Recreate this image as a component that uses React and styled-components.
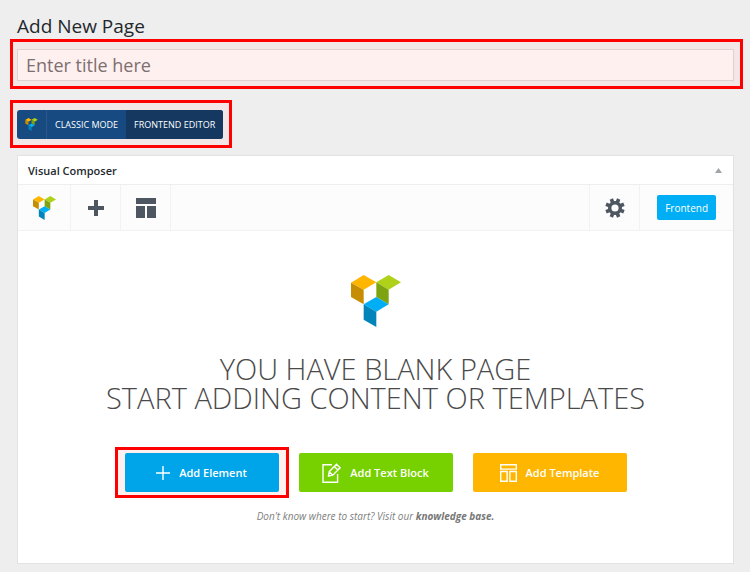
import React from "react";
import styled, { createGlobalStyle } from "styled-components";

const GlobalStyle = createGlobalStyle`
  * {
    box-sizing: border-box;
  }

  body {
    margin: 0;
    background-color: #eeeeee;
    color: #23282d;
    font-family: "Open Sans", "Noto Sans", sans-serif;
  }

  button, input {
    font-family: inherit;
  }
`;

const Page = styled.main`
  padding: 13px 16px 9px 17px;
`;

const Title = styled.h1`
  margin: 0 0 10px;
  font-size: 19px;
  line-height: 26px;
  font-weight: 400;
`;

const Highlight = styled.div`
  position: relative;
  isolation: isolate;
  display: ${props => (props.$inline ? "inline-flex" : "flex")};

  &::after {
    content: "";
    position: absolute;
    z-index: -1;
    inset: ${props => props.$inset};
    border: 3px solid #ff0000;
    background-color: ${props => props.$tint || "#f3e6e6"};
    pointer-events: none;
  }
`;

const TitleInput = styled.input`
  flex: 1;
  min-width: 0;
  height: 32px;
  padding: 0 8px;
  border: 1px solid #e0d0d0;
  background-color: #fff0f0;
  color: #32373c;
  font-size: 18px;

  &::placeholder {
    color: #7c6f6f;
    opacity: 1;
  }
`;

const ModeRow = styled.div`
  display: flex;
  margin: 29px 0 16px;
`;

const ModeSwitch = styled.div`
  display: flex;
  height: 29px;
  border-radius: 3px;
  overflow: hidden;
  background-color: #164a80;
`;

const ModeLogo = styled.div`
  display: flex;
  align-items: center;
  justify-content: center;
  width: 30px;
  border-right: 1px solid #2c5788;
`;

const ModeButton = styled.button`
  padding: 0 8px;
  border: 0;
  background-color: ${props => (props.$dark ? "#14385f" : "#164a80")};
  color: #ffffff;
  font-size: 9px;
  font-weight: 500;
  text-transform: uppercase;
`;

const Panel = styled.section`
  border: 1px solid #e2e2e2;
  background-color: #ffffff;
`;

const PanelHeader = styled.header`
  display: flex;
  align-items: center;
  justify-content: space-between;
  height: 29px;
  padding: 0 11px 0 10px;
  border-bottom: 1px solid #eeeeee;
`;

const PanelTitle = styled.h2`
  margin: 0;
  font-size: 11px;
  font-weight: 600;
`;

const ToggleButton = styled.button`
  display: flex;
  padding: 0;
  border: 0;
  background: none;
`;

const Toolbar = styled.nav`
  display: flex;
  height: 46px;
  border-bottom: 1px solid #f2f2f2;
  background-color: #fcfcfc;
`;

const ToolButton = styled.button`
  display: flex;
  align-items: center;
  justify-content: center;
  width: ${props => (props.$wide ? "53px" : "50px")};
  padding: 0;
  border: 0;
  border-right: 1px solid #f2f2f2;
  background: none;
`;

const ToolbarEnd = styled.div`
  display: flex;
  align-items: center;
  margin-left: auto;
  border-left: 1px solid #f2f2f2;

  ${ToolButton} {
    height: 100%;
  }
`;

const FrontendButton = styled.button`
  height: 25px;
  margin: 0 17px;
  padding: 0 8px;
  border: 0;
  border-radius: 2px;
  background-color: #00aef5;
  color: #ffffff;
  font-size: 10px;
  font-weight: 500;
`;

const Welcome = styled.div`
  display: flex;
  flex-direction: column;
  align-items: center;
  padding: 44px 16px 39px;
`;

const WelcomeTitle = styled.h3`
  margin: 27px 0 41px;
  color: #4a4a4a;
  font-size: 29px;
  line-height: 29px;
  font-weight: 300;
  text-align: center;
  text-transform: uppercase;
`;

const Actions = styled.div`
  display: flex;
  flex-wrap: wrap;
  justify-content: center;
  gap: 20px;
`;

const ActionButton = styled.button`
  display: flex;
  align-items: center;
  justify-content: center;
  gap: 9px;
  width: 154px;
  height: 39px;
  padding: 0;
  border: 0;
  border-radius: 2px;
  background-color: ${props => props.$color};
  color: #ffffff;
  font-size: 11px;
  font-weight: 600;
`;

const Hint = styled.p`
  margin: 16px 0 0;
  color: #808080;
  font-size: 10px;
  line-height: 16px;
  font-style: italic;
`;

const HintLink = styled.a`
  color: #777777;
  font-weight: 700;
  text-decoration: none;
`;

const Logo = ({ width, height }) => (
  <svg width={width} height={height} viewBox="0 0 150 156" aria-hidden="true">
    <path fill="#ffb600" d="M0 23 38 0l38 22-38 22z" />
    <path fill="#c68d00" d="M0 23l38 21v44L0 66z" />
    <path fill="#afd11a" d="M76 22 113 0l37 22-37 22z" />
    <path fill="#7ea310" d="M76 22l37 22v44L76 66z" />
    <path fill="#00aef5" d="M38 88l38-22 37 22-37 22z" />
    <path fill="#0084ba" d="M38 88l38 22v46L38 134z" />
  </svg>
);

const PlusIcon = () => (
  <svg width="16" height="16" viewBox="0 0 16 16" fill="#4d5661" aria-hidden="true">
    <path d="M6 0h4v6h6v4h-6v6H6v-6H0V6h6z" />
  </svg>
);

const LayoutIcon = () => (
  <svg width="20" height="20" viewBox="0 0 20 20" fill="#4d5661" aria-hidden="true">
    <path d="M0 0h20v6H0zM0 8h9v12H0zM11 8h9v12h-9z" />
  </svg>
);

const teeth = [0, 45, 90, 135, 180, 225, 270, 315];

const GearIcon = () => (
  <svg width="20" height="20" viewBox="0 0 20 20" aria-hidden="true">
    <circle cx="10" cy="10" r="5.3" fill="none" stroke="#4d5661" strokeWidth="3.4" />
    {teeth.map(angle => (
      <path
        key={angle}
        fill="#4d5661"
        d="M8.2 4V.3h3.6V4z"
        transform={`rotate(${angle + 22.5} 10 10)`}
      />
    ))}
  </svg>
);

const ThinPlusIcon = () => (
  <svg width="14" height="14" viewBox="0 0 14 14" fill="none" stroke="#fff" strokeWidth="1.4" aria-hidden="true">
    <path d="M7 0v14M0 7h14" />
  </svg>
);

const EditIcon = () => (
  <svg width="19" height="20" viewBox="0 0 19 20" fill="none" stroke="#fff" strokeWidth="1.4" aria-hidden="true">
    <path d="M10 1.7H1v17.6h14.6V11" />
    <path d="M6.5 13.2l.7-4.5 7.3-7.5 3.6 3.6-7.3 7.4zM12.3 3.5l3.6 3.6M7.2 8.7l3.6 3.5" />
  </svg>
);

const TemplateIcon = () => (
  <svg width="17" height="18" viewBox="0 0 17 18" fill="none" stroke="#fff" strokeWidth="1.4" aria-hidden="true">
    <path d="M.7.7h15.6v4.4H.7zM.7 7.5h6.4v9.8H.7zM9.9 7.5h6.4v9.8H9.9z" />
  </svg>
);

const App = () => {
  return (
    <Page>
      <GlobalStyle />
      <Title>Add New Page</Title>
      <Highlight $inset="-10px -9px -8px -7px">
        <TitleInput type="text" aria-label="Page title" placeholder="Enter title here" />
      </Highlight>

      <ModeRow>
        <Highlight $inline $inset="-10px -9px -9px -7px">
          <ModeSwitch>
            <ModeLogo>
              <Logo width={13} height={13} />
            </ModeLogo>
            <ModeButton type="button">Classic mode</ModeButton>
            <ModeButton type="button" $dark>Frontend editor</ModeButton>
          </ModeSwitch>
        </Highlight>
      </ModeRow>

      <Panel>
        <PanelHeader>
          <PanelTitle>Visual Composer</PanelTitle>
          <ToggleButton type="button" aria-label="Toggle panel">
            <svg width="7" height="5" viewBox="0 0 7 5" fill="#a0a5aa">
              <path d="M3.5 0 7 5H0z" />
            </svg>
          </ToggleButton>
        </PanelHeader>

        <Toolbar>
          <ToolButton type="button" $wide aria-label="Visual Composer">
            <Logo width={23} height={24} />
          </ToolButton>
          <ToolButton type="button" aria-label="Add element">
            <PlusIcon />
          </ToolButton>
          <ToolButton type="button" aria-label="Templates">
            <LayoutIcon />
          </ToolButton>
          <ToolbarEnd>
            <ToolButton type="button" aria-label="Settings">
              <GearIcon />
            </ToolButton>
            <FrontendButton type="button">Frontend</FrontendButton>
          </ToolbarEnd>
        </Toolbar>

        <Welcome>
          <Logo width={50} height={52} />
          <WelcomeTitle>
            You have blank page
            <br />
            Start adding content or templates
          </WelcomeTitle>
          <Actions>
            <Highlight $inset="-6px -10px" $tint="#ffefef">
              <ActionButton type="button" $color="#00a4e8">
                <ThinPlusIcon />
                Add Element
              </ActionButton>
            </Highlight>
            <ActionButton type="button" $color="#77d000">
              <EditIcon />
              Add Text Block
            </ActionButton>
            <ActionButton type="button" $color="#ffb600">
              <TemplateIcon />
              Add Template
            </ActionButton>
          </Actions>
          <Hint>
            Don't know where to start? Visit our <HintLink href="#knowledge-base">knowledge base.</HintLink>
          </Hint>
        </Welcome>
      </Panel>
    </Page>
  );
};

export default App;
